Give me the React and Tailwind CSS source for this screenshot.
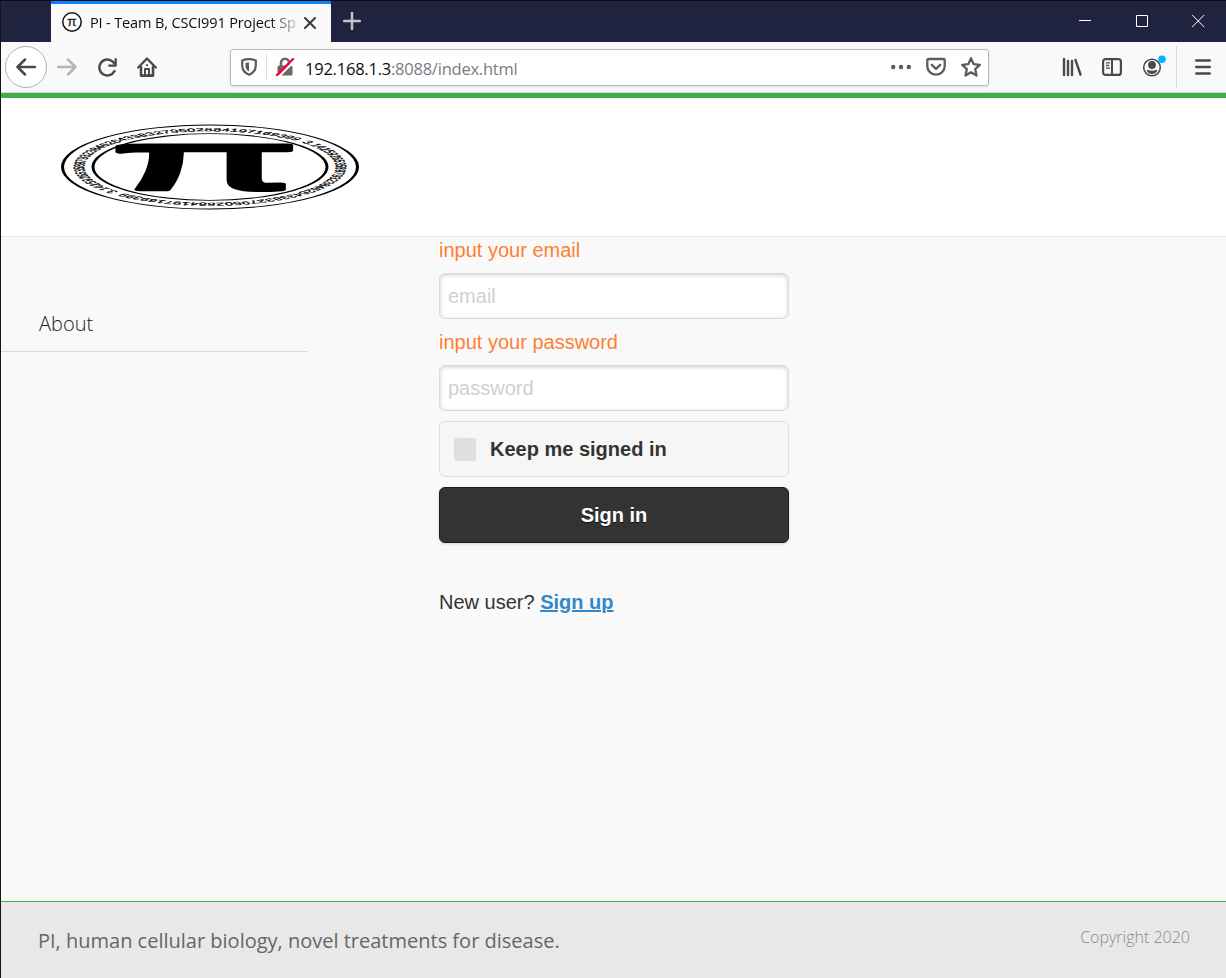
const DIGITS = "3.141592653589793238462643383279502884197169399";

function PiLogo() {
  return (
    <svg className="block h-[88px] w-[300px]" viewBox="0 0 300 88" aria-label="PI">
      <defs>
        <path id="ring-right" d="M91.400 -86.500 A125.800 125.800 0 0 1 -91.400 86.500 A125.800 125.800 0 0 1 -125.800 0" />
        <path id="ring-left" d="M-91.400 86.500 A125.800 125.800 0 0 1 91.400 -86.500 A125.800 125.800 0 0 1 125.800 0" />
      </defs>
      <g transform="translate(150 44) scale(1 0.285)">
        <circle r="147.500" fill="#fff" stroke="#000" strokeWidth="3" />
        <circle r="117" fill="none" stroke="#000" strokeWidth="3" />
        <g fontFamily="'Liberation Sans'" fontSize="15" fill="#000" stroke="#000" strokeWidth="0.600" textRendering="geometricPrecision">
          <text>
            <textPath href="#ring-right" textLength="387" lengthAdjust="spacing">{DIGITS}</textPath>
          </text>
          <text>
            <textPath href="#ring-left" textLength="387" lengthAdjust="spacing">{DIGITS}</textPath>
          </text>
        </g>
      </g>
      <text
        transform="translate(145 66.500) scale(2.450 0.750)"
        textAnchor="middle"
        fontFamily="'Liberation Sans'"
        fontSize="112"
        stroke="#000"
        strokeWidth="4.500"
        strokeLinejoin="round"
      >
        π
      </text>
    </svg>
  );
}

function TitleBar() {
  return (
    <div className="flex h-[42px] shrink-0 border-t border-[#0b0b14] bg-[#202340] pl-[50px]">
      <div className="flex w-[280px] items-center border-t-[3px] border-[#0a84ff] bg-[#f9f9fa] pb-0.5 pl-[11px]">
        <svg className="size-5 shrink-0" viewBox="0 0 20 20">
          <circle cx="10" cy="10" r="9.200" fill="#fff" stroke="#111" strokeWidth="1.500" />
          <text x="10" y="14" textAnchor="middle" fontFamily="'Liberation Sans'" fontSize="13.500" stroke="#222" strokeWidth="0.300" fill="#222">π</text>
        </svg>
        <div className="mt-0.5 ml-2 w-[208px] overflow-hidden bg-linear-to-r from-[#0c0c0d] from-86% to-[#0c0c0d]/15 bg-clip-text font-['Open_Sans',sans-serif] text-[14.5px] leading-5 tracking-[-0.14px] whitespace-nowrap text-transparent">
          PI - Team B, CSCI991 Project Sp
        </div>
        <svg className="mt-px ml-1.5 size-3 shrink-0" viewBox="0 0 12 12" stroke="#3a3a3d" strokeWidth="2" strokeLinecap="round">
          <path d="M1 1l10 10M11 1L1 11" />
        </svg>
      </div>
      <svg className="mt-[11px] ml-3 size-[18px]" viewBox="0 0 18 18" stroke="#c5c5cd" strokeWidth="2.500" strokeLinecap="round">
        <path d="M9 1v16M1 9h16" />
      </svg>
      <div className="ml-auto flex pt-[13px] pr-[21px]">
        <svg className="h-3.5 w-[126px]" viewBox="0 0 126 14" fill="none" stroke="#fff" strokeWidth="1">
          <path d="M0 6.500h12M57.500 1.500h11v11h-11zM113 .8l12.400 12.400M125.400 .8L113 13.200" />
        </svg>
      </div>
    </div>
  );
}

function Toolbar() {
  return (
    <div className="flex h-[51px] shrink-0 items-center border-b border-[#d5d5d8] bg-[#f9f9fa] pr-[14px] pl-1">
      <div className="flex size-[42px] items-center justify-center rounded-full border border-[#b1b1b3] bg-white">
        <svg className="size-5" viewBox="0 0 20 20" fill="none" stroke="#4a4a4d" strokeWidth="2.500" strokeLinecap="round" strokeLinejoin="round">
          <path d="M19 10H1.500M9 2.500L1.500 10 9 17.500" />
        </svg>
      </div>
      <svg className="ml-[10px] size-5" viewBox="0 0 20 20" fill="none" stroke="#b5b5b7" strokeWidth="2.500" strokeLinecap="round" strokeLinejoin="round">
        <path d="M1 10h17.500M11 2.500l7.500 7.500-7.500 7.500" />
      </svg>
      <svg className="ml-5 size-5" viewBox="0 0 20 20" fill="none">
        <path d="M17.500 14A8 8 0 1 1 16 4.800l1.500 1.700" stroke="#4a4a4d" strokeWidth="2.500" strokeLinecap="round" />
        <path d="M18.700 2v6.600h-6.600" stroke="#4a4a4d" strokeWidth="2.200" strokeLinecap="round" strokeLinejoin="round" />
      </svg>
      <svg className="ml-5 size-5" viewBox="0 0 20 20" fill="none" stroke="#4a4a4d" strokeLinecap="round" strokeLinejoin="round">
        <path d="M1.200 10.500L10 1.500l8.800 9" strokeWidth="2.400" />
        <path d="M4 10v8.600h12V10" strokeWidth="2.600" />
        <path d="M8 18v-6h4v6" strokeWidth="2" />
        <path d="M10 8v.3" strokeWidth="2" />
      </svg>
      <div className="ml-[73px] flex h-[37px] w-[759px] items-center rounded-[3px] border border-[#b9b9bc] bg-white pr-[7px] pl-2.5 shadow-sm">
        <svg className="h-[18px] w-4" viewBox="0 0 16 18">
          <path d="M8 1.200c2.500 0 4.500.4 6.800 1.300v5c0 4.300-2.500 7.500-6.800 9.300-4.300-1.800-6.800-5-6.800-9.300v-5C3.500 1.600 5.500 1.200 8 1.200z" fill="none" stroke="#5b5b5e" strokeWidth="2.200" />
          <path d="M8 4.500c-1.400 0-2.300.1-3.500.5v3c0 2.500 1.200 4.200 3.500 5.500z" fill="#5b5b5e" />
        </svg>
        <div className="ml-[9px] h-[26px] w-px bg-[#dedee0]" />
        <svg className="ml-2 h-5 w-5" viewBox="0 0 20 20">
          <path d="M6 9V5.800a4 4 0 0 1 8 0V9" fill="none" stroke="#68686b" strokeWidth="2.600" />
          <rect x="2.500" y="8.500" width="15" height="10" rx="1.500" fill="#68686b" />
          <path d="M3.500 20L19.500 4" stroke="#fff" strokeWidth="2" />
          <path d="M2 18L18 2" stroke="#ff0039" strokeWidth="2.400" strokeLinecap="round" />
        </svg>
        <div className="ml-2.5 flex-1 pt-[3px] font-['Open_Sans',sans-serif] text-[16.5px] leading-6 tracking-[-0.23px] text-[#7b7b7f]">
          <span className="text-[#0c0c0d]">192.168.1.3</span>:8088/index.html
        </div>
        <svg className="size-5" viewBox="0 0 20 20" fill="#5b5b5e">
          <circle cx="2.200" cy="10" r="2.200" /><circle cx="10" cy="10" r="2.200" /><circle cx="17.800" cy="10" r="2.200" />
        </svg>
        <svg className="ml-[15px] size-5" viewBox="0 0 20 20" fill="none" stroke="#5b5b5e" strokeWidth="2.300" strokeLinecap="round" strokeLinejoin="round">
          <path d="M2.500 2h15c.7 0 1.200.5 1.200 1.200V9a8.700 8.700 0 0 1-17.400 0V3.200C1.300 2.500 1.800 2 2.500 2zM5.800 7.800L10 11.800l4.200-4" />
        </svg>
        <svg className="ml-[15px] size-5" viewBox="0 0 20 20" fill="none" stroke="#5b5b5e" strokeWidth="2.300" strokeLinejoin="round">
          <path d="M10 1.300l2.600 5.800 6.200.7-4.600 4.300 1.300 6.400L10 15.300l-5.500 3.200 1.300-6.400L1.200 7.800l6.200-.7z" />
        </svg>
      </div>
      <svg className="ml-[73px] size-5" viewBox="0 0 20 20" fill="none" stroke="#4a4a4d" strokeWidth="2.400" strokeLinecap="round">
        <path d="M2 2v16M6 4v14M10 4v14M13.500 3l5 14.500" />
      </svg>
      <svg className="ml-5 size-5" viewBox="0 0 20 20" fill="none" stroke="#4a4a4d">
        <rect x="1.100" y="2.100" width="17.800" height="15.800" rx="2.500" strokeWidth="2.200" />
        <path d="M10 2v16" strokeWidth="2" />
        <path d="M4 5.800h4M4 8.500h3M4 11.200h4" strokeWidth="1.300" />
      </svg>
      <svg className="ml-[21px] h-6 w-6" viewBox="0 0 24 24">
        <circle cx="9" cy="12.500" r="8.300" fill="none" stroke="#4a4a4d" strokeWidth="1.500" />
        <circle cx="9" cy="10" r="3.900" fill="#4a4a4d" />
        <path d="M3.500 14.700c2 .2 2.500 1 5.500 1s3.500-.8 5.500-1c-.8 3-2.800 4.300-5.500 4.300s-4.700-1.300-5.500-4.300z" fill="#4a4a4d" />
        <circle cx="19" cy="4.300" r="3.800" fill="#00b3ff" />
      </svg>
      <div className="ml-[9px] h-[42px] w-px bg-[#d9d9db]" />
      <svg className="ml-[18px] h-5 w-4" viewBox="0 0 16 20" stroke="#4a4a4d" strokeWidth="2.400" strokeLinecap="round">
        <path d="M1.200 3.500h13.600M1.200 10h13.600M1.200 16.500h13.600" />
      </svg>
    </div>
  );
}

function Field({ label, type, placeholder }) {
  return (
    <label className="block">
      <span className="block h-[36px] pt-[2px] leading-[23px] text-[#ff7f32]">{label}</span>
      <input
        type={type}
        placeholder={placeholder}
        className="block h-[46px] w-full rounded-[6px] border border-[#dadada] bg-white px-2 shadow-[inset_0_1px_4px_rgba(0,0,0,0.2)] outline-none placeholder:text-[#d0d0d0]"
      />
    </label>
  );
}

function SignInForm() {
  return (
    <form className="ml-[131px] w-[350px] shrink-0 font-['Liberation_Sans',Arial,sans-serif] text-[20px] text-[#333]">
      <Field label="input your email" type="text" placeholder="email" />
      <div className="mt-2.5">
        <Field label="input your password" type="password" placeholder="password" />
      </div>
      <label className="mt-2.5 flex h-[56px] items-center rounded-[6px] border border-[#ddd] bg-[#f6f6f6] pl-[14px] font-bold">
        <span className="mr-[14px] h-[23px] w-[22px] rounded-[3px] bg-[#dfdfdf]" />
        Keep me signed in
      </label>
      <button type="button" className="mt-2.5 block h-[56px] w-full rounded-[6px] border border-[#1d1d1d] bg-[#333] font-bold text-white shadow-[0_1px_3px_rgba(0,0,0,0.15)] text-shadow-[0_1px_0_#111]">
        Sign in
      </button>
      <p className="mt-[47px] leading-6">
        New user? <a className="font-bold text-[#3388cc] underline">Sign up</a>
      </p>
    </form>
  );
}

export default function App() {
  return (
    <div className="flex h-[978px] w-[1226px] flex-col overflow-hidden border-l border-[#141418] bg-[#f9f9f9]">
      <TitleBar />
      <Toolbar />
      <header className="h-[144px] shrink-0 border-t-[5px] border-b border-t-[#3eb049] border-b-[#e9e9e9] bg-white pt-[25px] pl-[59px]">
        <PiLogo />
      </header>
      <main className="flex flex-1">
        <nav className="h-[115px] w-[307px] shrink-0 border-b border-[#d9d9d9] pt-[73px] pl-[38px] font-['Open_Sans',sans-serif] text-[20px] leading-7 font-light text-[#222]">
          About
        </nav>
        <SignInForm />
      </main>
      <footer className="flex h-[77px] shrink-0 justify-between border-t border-[#3eb049] bg-[#e8e8e8] pt-6 pr-9 pl-[37px] font-['Open_Sans',sans-serif]">
        <p className="text-[20px] leading-[30px] text-[#666]">PI, human cellular biology, novel treatments for disease.</p>
        <p className="text-[16px] leading-[22px] font-light text-[#888]">Copyright 2020</p>
      </footer>
    </div>
  );
}
